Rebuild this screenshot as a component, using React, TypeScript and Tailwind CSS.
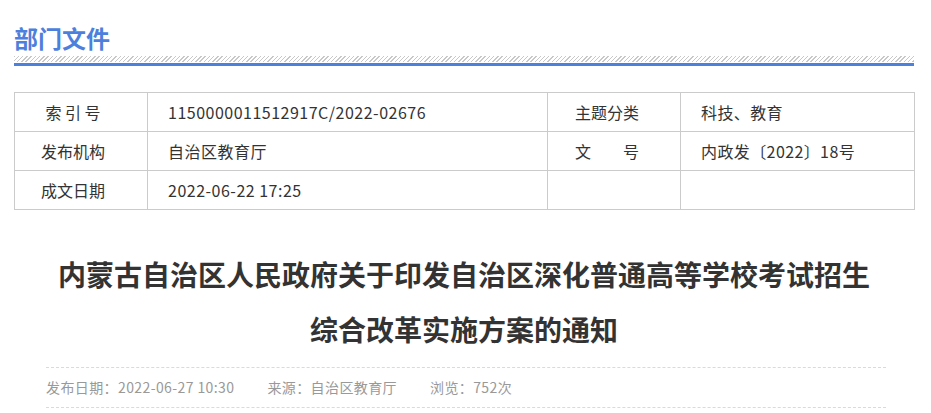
const rows = [
  ["索 引 号", "1150000011512917C/2022-02676", "主题分类", "科技、教育"],
  ["发布机构", "自治区教育厅", "文　　号", "内政发〔2022〕18号"],
  ["成文日期", "2022-06-22 17:25", "", ""],
];

const App = () => {
  return (
    <div
      className="min-h-screen bg-white pl-[14px] pt-[19px]"
      style={{ fontFamily: '"Noto Sans CJK SC", "Noto Sans", sans-serif' }}
    >
      <div className="w-[900px]">
        {/* Section header */}
        <h2 className="text-[24px] font-bold leading-[37px] text-[#4d7fdd]">部门文件</h2>
        <div className="h-[6px] bg-[repeating-linear-gradient(135deg,#c8c8c8_0,#c8c8c8_1px,#ffffff_1px,#ffffff_3px)]"></div>
        <div className="mt-[1px] h-[3px] bg-[#4d7fdd]"></div>

        {/* Info table */}
        <table className="mt-[26px] w-[900px] table-fixed border-collapse text-[16px] text-[#333]">
          <colgroup>
            <col className="w-[133px]" />
            <col className="w-[400px]" />
            <col className="w-[133px]" />
            <col className="w-[234px]" />
          </colgroup>
          <tbody>
            {rows.map((r, i) => (
              <tr key={i} className="h-[39px]">
                <td className="border border-[#cbcbcb] pr-[16px] text-center">{r[0]}</td>
                <td className="border border-[#cbcbcb] pl-[20px] tracking-[0.5px]">{r[1]}</td>
                <td className="border border-[#cbcbcb] pr-[14px] text-center">{r[2]}</td>
                <td className="border border-[#cbcbcb] pl-[20px] tracking-[0.4px]">{r[3]}</td>
              </tr>
            ))}
          </tbody>
        </table>

        {/* Title */}
        <h1 className="mt-[37px] text-center text-[28px] font-bold leading-[55px] text-[#333]">
          内蒙古自治区人民政府关于印发自治区深化普通高等学校考试招生
          <br />
          综合改革实施方案的通知
        </h1>

        {/* Meta */}
        <div className="ml-[32px] mt-[10px] flex w-[840px] gap-[33px] border-y border-dashed border-[#dadada] text-[14px] leading-[39px] tracking-[0.4px] text-[#999]">
          <span>发布日期：2022-06-27 10:30</span>
          <span>来源：自治区教育厅</span>
          <span>浏览：752次</span>
        </div>
      </div>
    </div>
  );
};

export default App;
